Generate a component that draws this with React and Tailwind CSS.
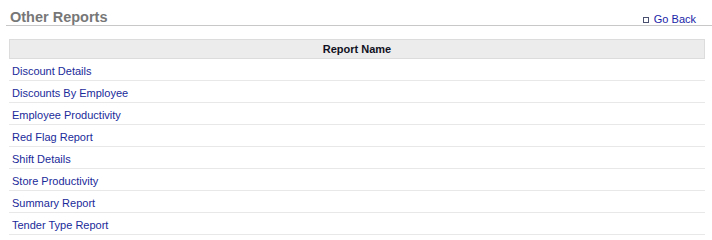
export default function App() {
  const rows = [
    "Discount Details",
    "Discounts By Employee",
    "Employee Productivity",
    "Red Flag Report",
    "Shift Details",
    "Store Productivity",
    "Summary Report",
    "Tender Type Report",
  ];
  return (
    <div className="w-[712px] h-[240px] bg-white" style={{ fontFamily: '"Liberation Sans", Arial, sans-serif' }}>
      <div className="ml-[6px] h-[26px] flex items-end justify-between border-b border-[#c8c8c8]">
        <div className="pl-[4px] pb-[0px] text-[14.5px] leading-[16px] font-bold text-[#777777]">Other Reports</div>
        <div className="flex items-center pr-[16px] pb-[0px] leading-[12px]">
          <span className="w-[6px] h-[6px] border border-[#4a5170] mr-[5px] mt-[1px]"></span>
          <a className="text-[11px] text-[#1a24a8]">Go Back</a>
        </div>
      </div>
      <div className="ml-[9px] mt-[13px] w-[696px]">
        <div className="h-[20px] bg-[#ececec] border border-[#dcdcdc] flex items-center justify-center pt-[1px] text-[11px] font-bold text-[#111122]">
          Report Name
        </div>
        {rows.map((r) => (
          <div key={r} className="h-[22px] border-b border-[#e8e8e8] flex items-center pl-[3px] pt-[3px] text-[11px] text-[#1a2a9a]">
            {r}
          </div>
        ))}
      </div>
    </div>
  );
}
